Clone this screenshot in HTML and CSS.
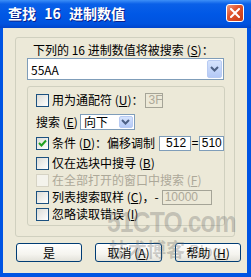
FILE: index.html
```html
<!DOCTYPE html>
<html lang="zh-CN">
<head>
  <meta charset="UTF-8" />
  <title>查找 16 进制数值</title>
  <link rel="stylesheet" href="styles.css">
</head>
<body>

<div class="window">
  <div class="titlebar">
    <span class="title">查找 16 进制数值</span>
    <span class="close">
      <svg width="10" height="10" viewBox="0 0 10 10"><path d="M1 1 L9 9 M9 1 L1 9" stroke="#fff" stroke-width="2" stroke-linecap="square"/></svg>
    </span>
  </div>

  <div class="client">
    <div class="group outer">
      <div class="prompt">下列的 16 进制数值将被搜索 (<u>S</u>)：</div>
      <div class="combo wide">
        <span class="value">55AA</span>
        <span class="drop"><svg width="9" height="6" viewBox="0 0 9 6"><polyline points="1,1 4.5,4.5 8,1" fill="none" stroke="#4d6185" stroke-width="2"/></svg></span>
      </div>

      <div class="group inner">
        <div class="row">
          <span class="check"></span>
          <span class="label">用为通配符 (<u>U</u>)：</span>
          <span class="edit disabled w-3f">3F</span>
        </div>
        <div class="row gap6">
          <span class="label">搜索 (<u>E</u>)</span>
          <div class="combo small">
            <span class="value">向下</span>
            <span class="drop"><svg width="9" height="6" viewBox="0 0 9 6"><polyline points="1,1 4.5,4.5 8,1" fill="none" stroke="#4d6185" stroke-width="2"/></svg></span>
          </div>
        </div>
        <div class="row gap5">
          <span class="check checked">
            <svg width="11" height="11" viewBox="0 0 11 11"><polyline points="2,5 4.5,7.5 9,2.5" fill="none" stroke="#21a121" stroke-width="2"/></svg>
          </span>
          <span class="label">条件 (<u>D</u>)：偏移调制</span>
          <span class="edit w-512"><span class="shift">512</span></span>
          <span class="equals">=</span>
          <span class="edit w-510">510</span>
        </div>
        <div class="row gap4">
          <span class="check"></span>
          <span class="label">仅在选块中搜寻 (<u>B</u>)</span>
        </div>
        <div class="row gap1 off">
          <span class="check"></span>
          <span class="label">在全部打开的窗口中搜索 (<u>F</u>)</span>
        </div>
        <div class="row gap1">
          <span class="check"></span>
          <span class="label">列表搜索取样 (<u>C</u>)，-</span>
          <span class="edit disabled w-count">10000</span>
        </div>
        <div class="row gap1">
          <span class="check"></span>
          <span class="label">忽略读取错误 (<u>I</u>)</span>
        </div>
      </div>
    </div>

    <div class="buttons">
      <button class="btn">是</button>
      <button class="btn wide-btn">取消 (<u>A</u>)</button>
      <button class="btn">帮助 (<u>H</u>)</button>
    </div>
  </div>

  <div class="watermark">
    <div class="wm-site">51CTO.com</div>
    <div class="wm-blog">技术博客 <span class="wm-en">Blog</span></div>
  </div>
</div>

</body>
</html>
```

FILE: styles.css
```css
body {
  margin: 0;
  font-family: "Noto Sans CJK SC", "Liberation Sans", sans-serif;
  font-size: 12px;
  color: #000;
  background: #fff;
}

.window {
  position: relative;
  width: 251px;
  height: 277px;
  background: #0054e3;
  overflow: hidden;
}

/* заголовок окна */
.titlebar {
  height: 28px;
  display: flex;
  align-items: center;
  justify-content: space-between;
  padding: 0 7px 0 8px;
  box-sizing: border-box;
  background: linear-gradient(#3d8ff7 0, #0a60e8 4px, #0058e6 50%, #0053df 85%, #0044cc 100%);
}

.title {
  color: #fff;
  font-weight: bold;
  font-size: 14px;
  word-spacing: 5px;
  text-shadow: 1px 1px #0a1f8a;
  margin-top: -2px;
}

.close {
  width: 18px;
  height: 18px;
  box-sizing: border-box;
  border: 1px solid #fff;
  border-radius: 3px;
  background: linear-gradient(135deg, #f09a80 0, #e2552e 40%, #c53a16 100%);
  display: flex;
  align-items: center;
  justify-content: center;
  margin-top: -3px;
}

.client {
  margin: 0 4px 0 3px;
  height: 245px;
  background: #ece9d8;
  overflow: hidden;
}

.group {
  border: 1px solid #d0d0bf;
  border-radius: 3px;
  box-sizing: border-box;
}

.outer {
  margin: 9px 0 0 12px;
  width: 220px;
  height: 200px;
}

.prompt {
  padding: 5px 0 0 17px;
  line-height: 13px;
  height: 13px;
}

.combo {
  display: flex;
  align-items: center;
  justify-content: space-between;
  box-sizing: border-box;
  border: 1px solid #7f9db9;
  background: #fff;
}

.combo.wide {
  margin: 2px 0 0 11px;
  width: 197px;
  height: 22px;
  padding: 0 1px 0 3px;
}

.combo.wide .drop {
  width: 15px;
  height: 18px;
}

.combo.small {
  width: 55px;
  height: 16px;
  padding: 0 1px 0 3px;
  margin-left: 2px;
}

.combo.small .drop {
  width: 14px;
  height: 12px;
}

.drop {
  display: flex;
  align-items: center;
  justify-content: center;
  border-radius: 2px;
  background: linear-gradient(#d5e3fd, #b4c9f6);
  border: 1px solid #b8cbf3;
  box-sizing: border-box;
}

.inner {
  margin: 6px 0 0 11px;
  width: 198px;
  height: 140px;
  padding: 5px 0 0 8px;
}

.row {
  display: flex;
  align-items: center;
  height: 16px;
  line-height: 16px;
  white-space: nowrap;
}

.gap6 { margin-top: 6px; }
.gap5 { margin-top: 5px; }
.gap4 { margin-top: 4px; }
.gap1 { margin-top: 1px; }

.check {
  width: 13px;
  height: 13px;
  box-sizing: border-box;
  border: 1px solid #1c5180;
  background: linear-gradient(135deg, #dcdcd7, #fff);
  margin-right: 3px;
  display: flex;
  align-items: center;
  justify-content: center;
  flex-shrink: 0;
}

.off .check {
  border-color: #d6d3c4;
  background: #f4f3ec;
}

.off .label {
  color: #aca899;
}

.edit {
  height: 15px;
  line-height: 13px;
  box-sizing: border-box;
  border: 1px solid #7f9db9;
  background: #fff;
  padding: 0 2px;
  overflow: hidden;
  font-family: "Liberation Sans", sans-serif;
}

.edit.disabled {
  border-color: #a5a497;
  background: #ece9d8;
  color: #aca899;
}

.w-3f { width: 18px; margin-left: 2px; }
.w-512 { width: 33px; margin-left: 4px; }
.w-510 { width: 26px; }
.w-count { width: 50px; margin-left: 3px; }

.shift {
  margin-left: 4px;
}

.equals {
  width: 8px;
  text-align: center;
  font-family: "Liberation Sans", sans-serif;
}

.buttons {
  display: flex;
  gap: 13px;
  margin: 6px 0 0 13px;
}

.btn {
  width: 66px;
  height: 19px;
  padding: 0;
  border: 1px solid #003c74;
  border-radius: 3px;
  background: linear-gradient(#fff 0, #f5f4ef 60%, #e3e2da 100%);
  font-family: "Noto Sans CJK SC", sans-serif;
  font-size: 12px;
  line-height: 16px;
  color: #000;
}

.btn.wide-btn {
  width: 67px;
}

/* водяной знак */
.watermark {
  position: absolute;
  left: 107px;
  top: 207px;
  color: rgba(105, 105, 105, 0.32);
  pointer-events: none;
}

.wm-site {
  font-family: "Liberation Sans", sans-serif;
  font-weight: bold;
  font-size: 30px;
  line-height: 30px;
  letter-spacing: -1px;
  transform: scaleX(0.82);
  transform-origin: left center;
}

.wm-blog {
  font-size: 19px;
  line-height: 24px;
  font-weight: bold;
  margin-left: 2px;
}

.wm-en {
  font-family: "Liberation Sans", sans-serif;
  font-size: 16px;
  font-weight: normal;
}
```
